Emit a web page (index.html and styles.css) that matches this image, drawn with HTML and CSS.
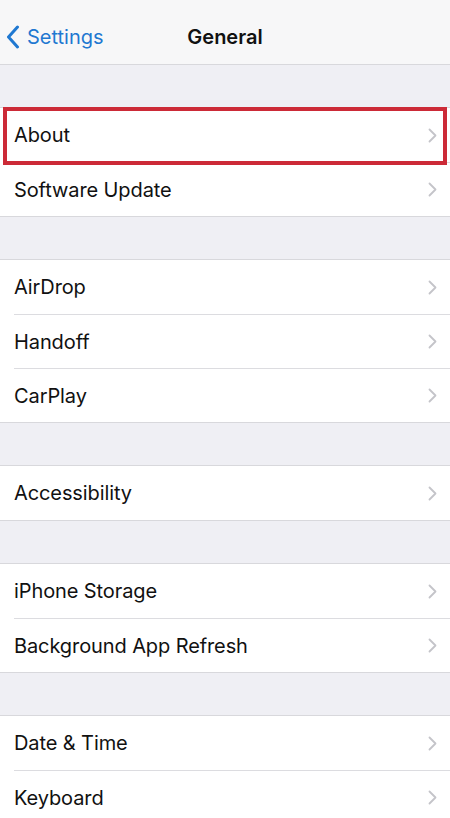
FILE: index.html
```html
<!DOCTYPE html>
<html>
<head>
<meta charset="utf-8">
<link rel="stylesheet" href="styles.css">
</head>
<body>
<div class="screen">
  <header class="nav">
    <div class="back">
      <svg class="back-icon" width="14" height="24" viewBox="0 0 14 24"><path d="M11.5 2 L2.5 12 L11.5 22" fill="none" stroke="currentColor" stroke-width="3" stroke-linecap="round" stroke-linejoin="round"/></svg>
      <span>Settings</span>
    </div>
    <div class="title">General</div>
  </header>

  <div class="gap"></div>
  <ul class="group">
    <li class="row highlighted"><span>About</span><svg class="chev" width="9" height="15" viewBox="0 0 9 15"><path d="M1.5 1.5 L7.5 7.5 L1.5 13.5" fill="none" stroke="currentColor" stroke-width="1.8" stroke-linecap="round" stroke-linejoin="round"/></svg></li>
    <li class="row"><span>Software Update</span><svg class="chev" width="9" height="15" viewBox="0 0 9 15"><path d="M1.5 1.5 L7.5 7.5 L1.5 13.5" fill="none" stroke="currentColor" stroke-width="1.8" stroke-linecap="round" stroke-linejoin="round"/></svg></li>
  </ul>

  <div class="gap"></div>
  <ul class="group">
    <li class="row"><span>AirDrop</span><svg class="chev" width="9" height="15" viewBox="0 0 9 15"><path d="M1.5 1.5 L7.5 7.5 L1.5 13.5" fill="none" stroke="currentColor" stroke-width="1.8" stroke-linecap="round" stroke-linejoin="round"/></svg></li>
    <li class="row"><span>Handoff</span><svg class="chev" width="9" height="15" viewBox="0 0 9 15"><path d="M1.5 1.5 L7.5 7.5 L1.5 13.5" fill="none" stroke="currentColor" stroke-width="1.8" stroke-linecap="round" stroke-linejoin="round"/></svg></li>
    <li class="row"><span>CarPlay</span><svg class="chev" width="9" height="15" viewBox="0 0 9 15"><path d="M1.5 1.5 L7.5 7.5 L1.5 13.5" fill="none" stroke="currentColor" stroke-width="1.8" stroke-linecap="round" stroke-linejoin="round"/></svg></li>
  </ul>

  <div class="gap"></div>
  <ul class="group">
    <li class="row"><span>Accessibility</span><svg class="chev" width="9" height="15" viewBox="0 0 9 15"><path d="M1.5 1.5 L7.5 7.5 L1.5 13.5" fill="none" stroke="currentColor" stroke-width="1.8" stroke-linecap="round" stroke-linejoin="round"/></svg></li>
  </ul>

  <div class="gap"></div>
  <ul class="group">
    <li class="row"><span>iPhone Storage</span><svg class="chev" width="9" height="15" viewBox="0 0 9 15"><path d="M1.5 1.5 L7.5 7.5 L1.5 13.5" fill="none" stroke="currentColor" stroke-width="1.8" stroke-linecap="round" stroke-linejoin="round"/></svg></li>
    <li class="row"><span>Background App Refresh</span><svg class="chev" width="9" height="15" viewBox="0 0 9 15"><path d="M1.5 1.5 L7.5 7.5 L1.5 13.5" fill="none" stroke="currentColor" stroke-width="1.8" stroke-linecap="round" stroke-linejoin="round"/></svg></li>
  </ul>

  <div class="gap"></div>
  <ul class="group">
    <li class="row"><span>Date &amp; Time</span><svg class="chev" width="9" height="15" viewBox="0 0 9 15"><path d="M1.5 1.5 L7.5 7.5 L1.5 13.5" fill="none" stroke="currentColor" stroke-width="1.8" stroke-linecap="round" stroke-linejoin="round"/></svg></li>
    <li class="row"><span>Keyboard</span><svg class="chev" width="9" height="15" viewBox="0 0 9 15"><path d="M1.5 1.5 L7.5 7.5 L1.5 13.5" fill="none" stroke="currentColor" stroke-width="1.8" stroke-linecap="round" stroke-linejoin="round"/></svg></li>
  </ul>
</div>
</body>
</html>
```

FILE: styles.css
```css
html, body {
  margin: 0;
  padding: 0;
}
body {
  background: #efeff4;
  font-family: Inter, "Liberation Sans", sans-serif;
  color: #111;
  overflow: hidden;
}
.screen {
  width: 450px;
  height: 818px;
  overflow: hidden;
  background: #efeff4;
}
.nav {
  height: 64px;
  background: #f7f7f8;
  border-bottom: 1px solid #d8d8dc;
  position: relative;
  display: flex;
  align-items: center;
}
.back {
  display: flex;
  align-items: center;
  gap: 7px;
  padding-left: 6px;
  color: #1f78d1;
  font-size: 20px;
  padding-top: 9px;
}
.back-icon {
  display: block;
}
.title {
  position: absolute;
  left: 0;
  right: 0;
  text-align: center;
  font-size: 20px;
  font-weight: 600;
  color: #111;
  padding-top: 9px;
  pointer-events: none;
}
.gap {
  height: 42px;
}
.group {
  list-style: none;
  margin: 0;
  padding: 0;
  background: #fff;
  border-top: 1px solid #d8d8dc;
  border-bottom: 1px solid #d8d8dc;
}
.row {
  height: 54px;
  margin-left: 14px;
  padding-right: 12px;
  display: flex;
  align-items: center;
  justify-content: space-between;
  font-size: 20px;
  letter-spacing: -0.1px;
  position: relative;
}
.row + .row {
  border-top: 1px solid #dcdce0;
  height: 53px;
}
.chev {
  display: block;
  color: #c4c4c9;
  margin-right: 1px;
}
.highlighted {
  z-index: 1;
}
.highlighted::after {
  content: "";
  position: absolute;
  left: -11px;
  right: 3px;
  top: -1px;
  bottom: -3px;
  border: 4px solid #cc2a37;
}
```
